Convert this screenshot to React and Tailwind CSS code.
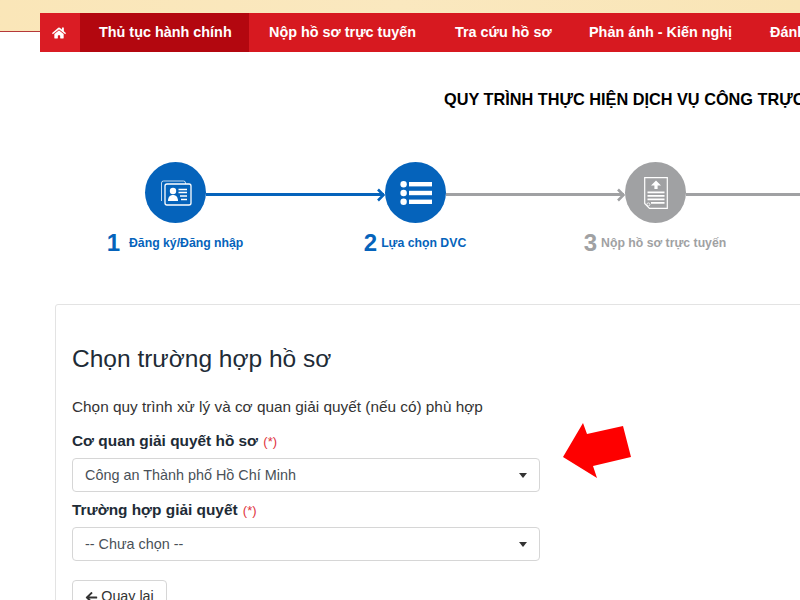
import React from "react";
import { FaHome, FaArrowLeft } from "react-icons/fa";

const NAV = [
  { label: "Thủ tục hành chính", active: true, cls: "w-[169px] pl-[19px]" },
  { label: "Nộp hồ sơ trực tuyến", cls: "w-[186px] pl-[20px]" },
  { label: "Tra cứu hồ sơ", cls: "w-[134px] pl-[20px]" },
  { label: "Phản ánh - Kiến nghị", cls: "w-[181px] pl-[20px]" },
  { label: "Đánh giá", cls: "w-[100px] pl-[20px]" },
];

const STEPS = [
  { n: 1, label: "Đăng ký/Đăng nhập", numCls: "text-[#0563bb]", textCls: "text-[#0563bb]", gap: "gap-[9px]" },
  { n: 2, label: "Lựa chọn DVC", numCls: "text-[#0563bb]", textCls: "text-[#0563bb]", gap: "gap-[4px]" },
  { n: 3, label: "Nộp hồ sơ trực tuyến", numCls: "text-[#a0a1a3]", textCls: "text-[#a0a1a3]", gap: "gap-[4px]" },
];

function CardsIcon() {
  return (
    <svg width="32" height="30" viewBox="0 0 32 30" fill="none">
      <path d="M1.5 23V5a2 2 0 0 1 2-2h20a2 2 0 0 1 2 2v1" stroke="#fff" strokeWidth="0.9" opacity="0.85" />
      <rect x="5" y="6" width="26" height="21" rx="2" stroke="#fff" strokeWidth="1.3" />
      <circle cx="13" cy="13" r="3.2" fill="#fff" />
      <path d="M8 23c0-4 2-6 5-6s5 2 5 6z" fill="#fff" />
      <path d="M18.5 11.5h8.5M18.5 14.5h8.5M20 18h7M21 21.5h6" stroke="#fff" strokeWidth="1.3" />
    </svg>
  );
}

function ListIcon() {
  return (
    <svg width="32" height="24" viewBox="0 0 32 24" fill="#fff">
      <circle cx="3.6" cy="3.3" r="3.2" />
      <circle cx="3.6" cy="12" r="3.2" />
      <circle cx="3.6" cy="20.7" r="3.2" />
      <rect x="9" y="1" width="23" height="4.4" />
      <rect x="9" y="9.8" width="23" height="4.4" />
      <rect x="9" y="18.6" width="23" height="4.4" />
    </svg>
  );
}

function UploadDocIcon() {
  return (
    <svg width="24" height="32" viewBox="0 0 24 32">
      <path d="M0.7 0.7h22.6v30.6H5.5L0.7 26.5z" fill="none" stroke="#fff" strokeWidth="1.2" />
      <path d="M12 3.5l5 5h-3.4V12h-3.2V8.5H7z" fill="#fff" />
      <path d="M3.5 14.5h17v1.7h-17zM3.5 18h17v1.7h-17zM3.5 21.5h17v1.7h-17zM7 25h13.5v1.7H7z" fill="#fff" />
      <circle cx="4.4" cy="27.4" r="1.5" fill="none" stroke="#fff" strokeWidth="0.8" />
    </svg>
  );
}

function Circle({ color, children }) {
  return (
    <div className={`w-[61px] h-[61px] rounded-full shrink-0 flex items-center justify-center ${color}`}>
      {children}
    </div>
  );
}

function Connector({ line, arrow, w, tip = true }) {
  return (
    <div className={`flex items-center h-[14px] mt-[4px] ${w}`}>
      <div className={`flex-1 h-[3px] ${line}`} />
      {tip && (
        <svg width="8" height="14" viewBox="0 0 8 14" className={`-ml-[7px] ${arrow}`}>
          <path d="M1 1.5l5.5 5.5-5.5 5.5" fill="none" stroke="currentColor" strokeWidth="2.6" />
        </svg>
      )}
    </div>
  );
}

function SelectBox({ value }) {
  return (
    <div className="w-[468px] h-[34px] rounded border border-[#d6d6d6] bg-white pt-[1px] pl-[12px] pr-[12px] flex items-center justify-between text-[14.4px] text-[#495057]">
      <span>{value}</span>
      <span className="w-0 h-0 border-x-[4px] border-x-transparent border-t-[5px] border-t-[#333]" />
    </div>
  );
}

export default function App() {
  return (
    <div className="relative w-[800px] h-[600px] overflow-hidden bg-white font-['Liberation_Sans',Arial,sans-serif]">
      {/* Top banner */}
      <div className="h-[32px] bg-gradient-to-r from-[#fae6b8] via-[#fae8bf] to-[#f9e5b6] border-b border-[#b5383a]" />

      {/* Main menu */}
      <nav className="-mt-[19px] ml-[40px] h-[39px] flex items-center bg-[#d71920] text-white text-[14.4px] font-bold whitespace-nowrap shrink-0">
        <div className="w-[40px] h-full shrink-0 flex items-center justify-center pr-[2px] bg-[#da1c24]">
          <FaHome className="text-[14px]" />
        </div>
        {NAV.map((item) => (
          <div
            key={item.label}
            className={`h-full shrink-0 flex items-center ${item.cls} ${item.active ? "bg-[#b3070f]" : ""}`}
          >
            {item.label}
          </div>
        ))}
      </nav>

      <h1 className="mt-[38px] ml-[444px] text-[16.3px] leading-[18px] font-bold text-black whitespace-nowrap">
        QUY TRÌNH THỰC HIỆN DỊCH VỤ CÔNG TRỰC TUYẾN
      </h1>

      {/* Process stepper */}
      <div className="mt-[54px] ml-[145px] flex items-center w-[800px]">
        <Circle color="bg-[#0563bb]"><CardsIcon /></Circle>
        <Connector line="bg-[#0563bb]" arrow="text-[#0563bb]" w="w-[179px]" />
        <Circle color="bg-[#0563bb]"><ListIcon /></Circle>
        <Connector line="bg-[#a0a1a3]" arrow="text-[#a0a1a3]" w="w-[179px]" />
        <Circle color="bg-[#a0a1a3]"><UploadDocIcon /></Circle>
        <Connector line="bg-[#a0a1a3]" arrow="text-[#a0a1a3]" w="w-[179px]" tip={false} />
      </div>
      <div className="mt-[5px] ml-[55px] grid grid-cols-[240px_240px_240px] h-[30px]">
        {STEPS.map((s) => (
          <div key={s.n} className={`flex items-center justify-center ${s.gap}`}>
            <span className={`text-[24px] leading-[30px] font-bold ${s.numCls}`}>{s.n}</span>
            <span className={`text-[12.25px] font-bold ${s.textCls}`}>{s.label}</span>
          </div>
        ))}
      </div>

      {/* Form card */}
      <div className="mt-[46px] ml-[55px] w-[800px] h-[400px] border border-[#e3e3e3] rounded-[3px] pl-[16px] pt-[39px]">
        <h2 className="text-[24.5px] leading-[30px] text-[#212b36]">Chọn trường hợp hồ sơ</h2>
        <p className="mt-[23px] text-[15.35px] leading-[20px] text-[#333]">
          Chọn quy trình xử lý và cơ quan giải quyết (nếu có) phù hợp
        </p>
        <div className="mt-[14px] text-[15.4px] leading-[20px] font-bold text-[#212b36]">
          Cơ quan giải quyết hồ sơ <span className="ml-[1px] text-[13px] font-normal text-[#e0333c]">(*)</span>
        </div>
        <div className="mt-[6px]"><SelectBox value="Công an Thành phố Hồ Chí Minh" /></div>
        <div className="mt-[8px] text-[15.4px] leading-[20px] font-bold text-[#212b36]">
          Trường hợp giải quyết <span className="ml-[1px] text-[13px] font-normal text-[#e0333c]">(*)</span>
        </div>
        <div className="mt-[6px]"><SelectBox value="-- Chưa chọn --" /></div>
        <div className="mt-[19px] w-[95px] h-[34px] rounded border border-[#d6d6d6] flex items-center justify-center gap-[3px] text-[14.3px] text-[#333]">
          <FaArrowLeft className="text-[13px]" />
          Quay lại
        </div>
      </div>

      {/* Annotation arrow on top of the form */}
      <svg className="absolute left-[560px] top-[420px]" width="74" height="62" viewBox="0 0 74 62">
        <polygon points="3,37 23,3 27,14 63,6 71,37 33,46 37,58" fill="#fe0000" />
      </svg>
    </div>
  );
}
